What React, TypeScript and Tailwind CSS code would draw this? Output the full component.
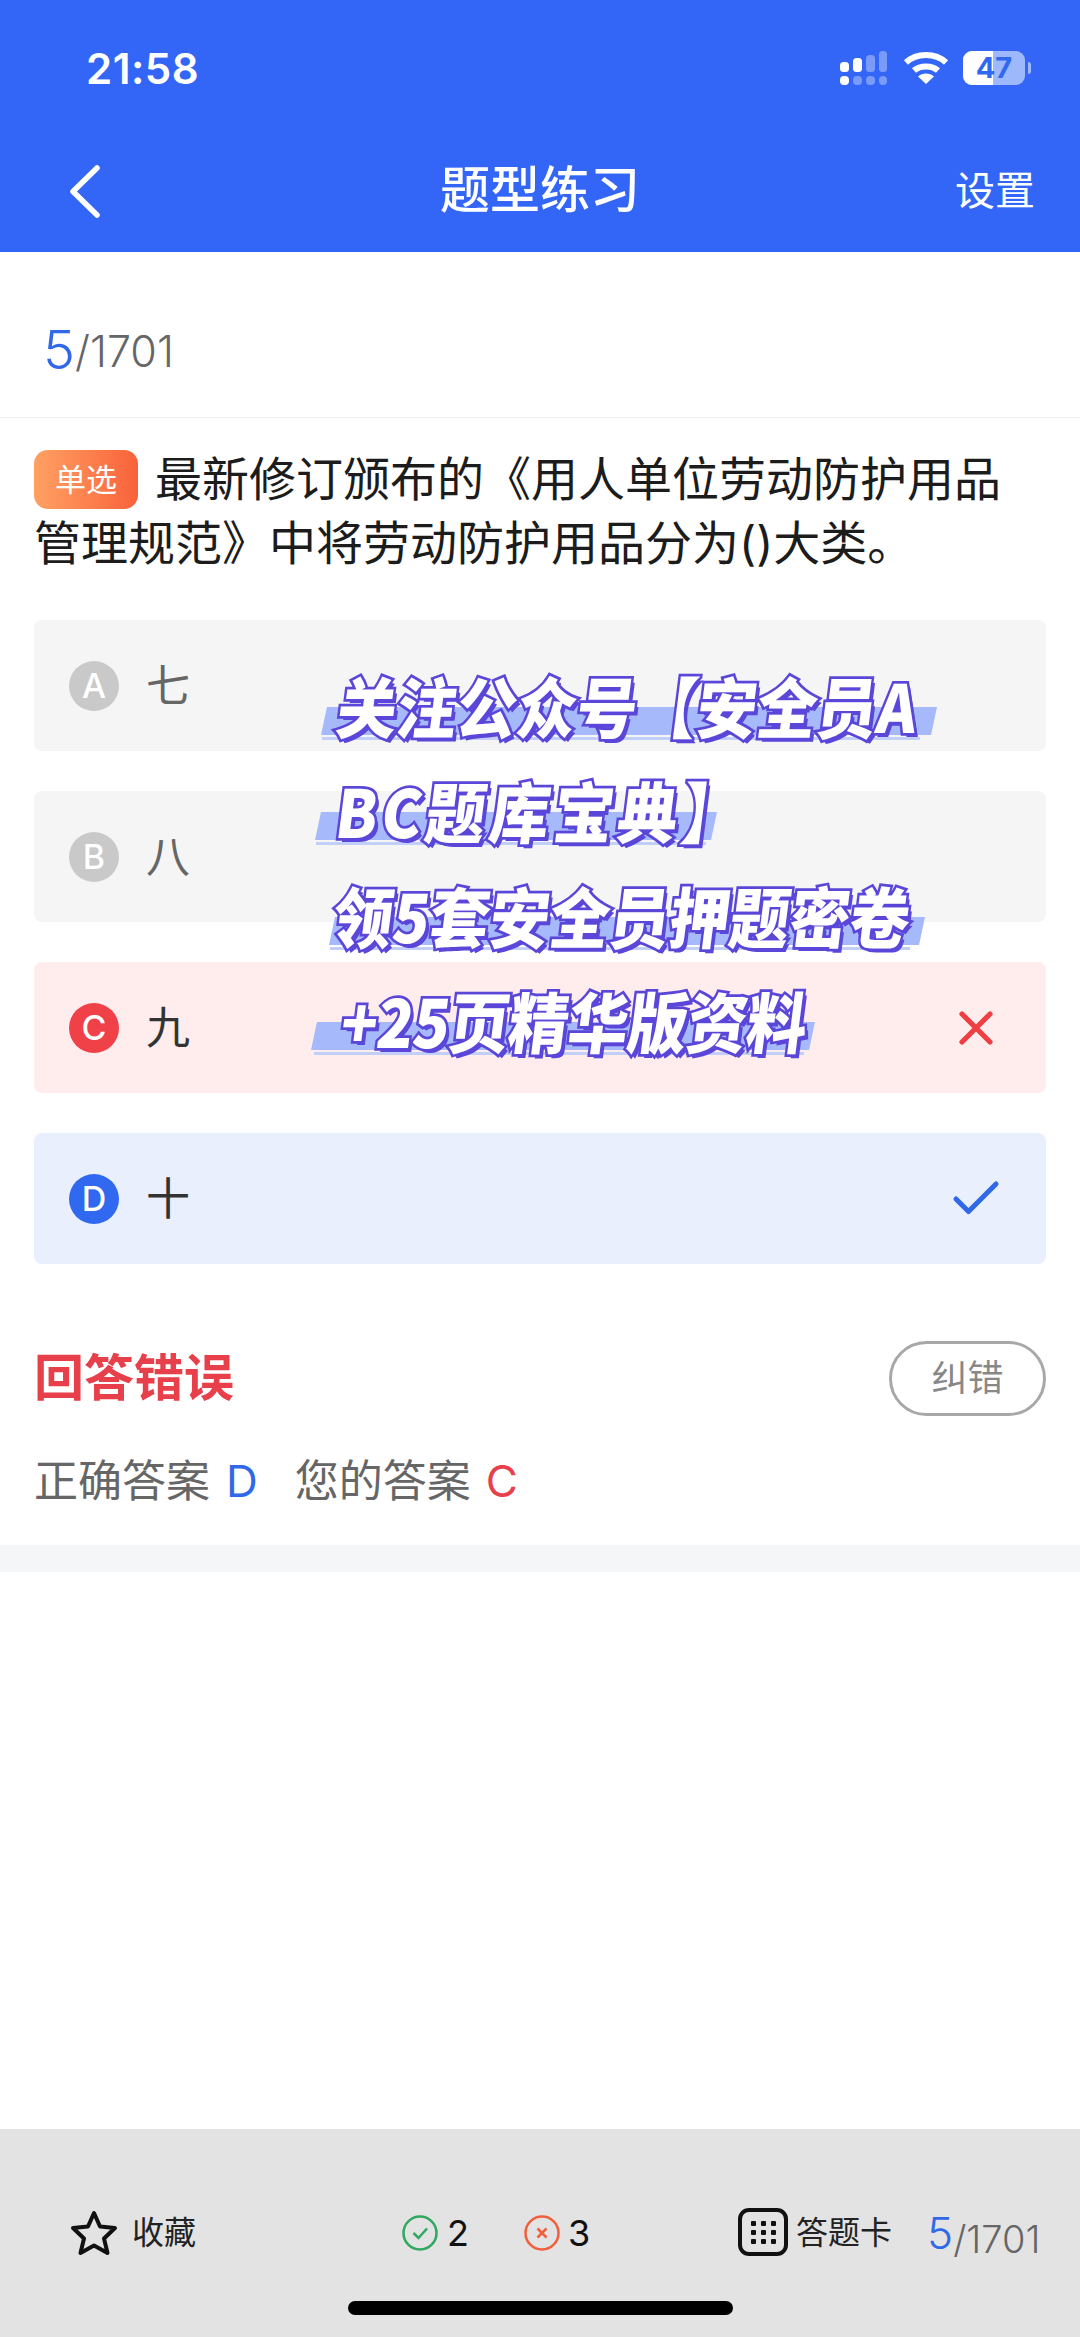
import { Check, X } from 'lucide-react';

const SANS = 'font-["Inter","Noto_Sans_CJK_SC",sans-serif]';

const options = [
  { key: 'A', text: '七', box: 'bg-[#f5f5f5]', dot: 'bg-[#c9c9c9]', color: 'text-[#666]', mark: null },
  { key: 'B', text: '八', box: 'bg-[#f5f5f5]', dot: 'bg-[#c9c9c9]', color: 'text-[#666]', mark: null },
  { key: 'C', text: '九', box: 'bg-[#ffecec]', dot: 'bg-[#f04048]', color: 'text-[#333]', mark: 'wrong' },
  { key: 'D', text: '十', box: 'bg-[#e9effd]', dot: 'bg-[#3068f0]', color: 'text-[#333]', mark: 'right' },
];

const promoLines = [
  { text: '关注公众号【安全员A', left: 'ml-[24px]', bar: 'ml-[10px] w-[610px]', thin: 'ml-[8px] w-[598px]' },
  { text: 'BC题库宝典】', left: 'ml-[23px] tracking-[4px]', bar: 'ml-[4px] w-[396px]', thin: 'ml-[2px] w-[390px]' },
  { text: '领5套安全员押题密卷', left: 'ml-[20px]', bar: 'ml-[18px] w-[590px]', thin: 'ml-[16px] w-[580px]' },
  { text: '+25页精华版资料', left: 'ml-[28px] tracking-[-0.5px]', bar: 'w-[498px]', thin: 'w-[490px]' },
];

function StatusIcons() {
  return (
    <div className="flex items-center">
      <svg width="50" height="34" viewBox="0 0 50 34" fill="#fff">
        <rect x="1" y="11" width="9" height="10" rx="3.5" />
        <rect x="14" y="7" width="9" height="14" rx="3.5" />
        <rect x="27" y="4" width="9" height="17" rx="3.5" opacity="0.35" />
        <rect x="40" y="0" width="8" height="21" rx="3.5" opacity="0.35" />
        <rect x="1" y="25" width="9" height="9" rx="4" />
        <rect x="14" y="25" width="9" height="9" rx="4" opacity="0.35" />
        <rect x="27" y="25" width="9" height="9" rx="4" opacity="0.35" />
        <rect x="40" y="25" width="8" height="9" rx="4" opacity="0.35" />
      </svg>
      <svg className="ml-[14px]" width="46" height="34" viewBox="0 0 46 34" fill="none" stroke="#fff" strokeWidth="6">
        <path d="M3 11.5C13.5 1.5 32.5 1.500 43 11.500" />
        <path d="M11 19.500C17 14 29 14 35 19.500" />
        <path d="M23 33L15 25.500C19 21.500 27 21.500 31 25.500Z" fill="#fff" stroke="none" />
      </svg>
      <div className="relative ml-[14px] h-[34px] w-[62px] overflow-hidden rounded-[9px] bg-[#9db8fb]">
        <div className="h-full w-[30px] bg-white" />
        <span className={`absolute inset-0 flex items-center justify-center text-[29px] font-bold text-[#3068f0] ${SANS}`}>47</span>
      </div>
      <div className="ml-[3px] h-[12px] w-[3px] rounded-r-full bg-[#9db8fb]" />
    </div>
  );
}

function CardIcon() {
  return (
    <div className="grid h-[48px] w-[50px] grid-cols-[repeat(3,5px)] content-center justify-center gap-x-[5px] gap-y-[4px] rounded-[11px] border-[4px] border-[#111]">
      {Array.from({ length: 9 }).map((_, i) => (
        <span key={i} className="h-[5px] w-[5px] rounded-[1px] bg-[#111]" />
      ))}
    </div>
  );
}

export default function App() {
  return (
    <div className={`relative flex h-[2337px] w-[1080px] flex-col overflow-hidden bg-white ${SANS}`}>
      {/* blue header with status bar */}
      <header className="h-[252px] shrink-0 bg-[#3366f6] px-[34px] text-white">
        <div className="flex h-[136px] items-center justify-between pl-[52px] pr-[15px]">
          <span className="text-[42px] font-semibold tracking-[0.5px]">21:58</span>
          <StatusIcons />
        </div>
        <div className="relative flex h-[116px] items-start justify-center">
          <svg className="absolute left-[36px] top-[29px]" width="30" height="53" viewBox="0 0 30 53" fill="none" stroke="#fff" strokeWidth="5.5" strokeLinecap="round" strokeLinejoin="round">
            <path d="M27 3L3 26.5L27 50" />
          </svg>
          <h1 className="mt-[19px] text-[50px] font-medium leading-[70px]">题型练习</h1>
          <span className="absolute right-[11px] top-[25px] text-[40px] leading-[60px]">设置</span>
        </div>
      </header>

      <div className="flex h-[166px] shrink-0 items-center border-b border-[#f2f2f2] pl-[43px] pt-[30px]">
        <span className="text-[54px] font-light leading-none text-[#3068e8]">5</span>
        <span className="mt-[4px] text-[43px] font-light leading-none text-[#666]">/1701</span>
      </div>

      <main className="px-[34px]">
        <p className="mt-[29px] pr-[10px] text-[47px] leading-[64px] text-[#1c1c1c]">
          <span className="relative top-[3px] mr-[17px] inline-flex h-[59px] w-[104px] items-center justify-center rounded-[14px] bg-gradient-to-r from-[#ffa063] to-[#f8613b] align-top text-[31px] leading-none text-white">
            单选
          </span>
          最新修订颁布的《用人单位劳动防护用品管理规范》中将劳动防护用品分为()大类。
        </p>

        <div className="mt-[45px] flex flex-col gap-[40px]">
          {options.map((o) => (
            <div key={o.key} className={`flex h-[131px] items-center rounded-[8px] pl-[35px] pr-[40px] ${o.box}`}>
              <span className={`flex h-[50px] w-[50px] items-center justify-center rounded-full text-[34px] font-medium text-white ${o.dot}`}>
                {o.key}
              </span>
              <span className={`ml-[27px] text-[44px] leading-none ${o.color}`}>{o.text}</span>
              {o.mark === 'wrong' && <X className="ml-auto mr-[2px] text-[#ee3f45]" size={56} strokeWidth={2.200} />}
              {o.mark === 'right' && <Check className="ml-auto text-[#3068e8]" size={60} strokeWidth={2} />}
            </div>
          ))}
        </div>

        <div className="mt-[76px] flex items-center justify-between">
          <span className="text-[50px] font-bold leading-[76px] text-[#e8404a]">回答错误</span>
          <button className="h-[75px] w-[157px] rounded-full border-[3px] border-[#a8a8a8] text-[36px] text-[#888]">纠错</button>
        </div>
        <p className="mt-[33px] text-[44px] leading-[64px] text-[#666]">
          正确答案<span className="ml-[16px] text-[#3068e8]">D</span>
          <span className="ml-[37px]">您的答案</span>
          <span className="ml-[15px] text-[#e8404a]">C</span>
        </p>
      </main>

      <div className="mt-[32px] h-[27px] shrink-0 bg-[#f4f6f7]" />

      {/* bottom bar */}
      <footer className="relative mt-auto h-[208px] shrink-0 bg-[#e3e3e3]">
        <div className="flex h-[210px] items-start pl-[70px] pr-[34px] pt-[79px]">
          <div className="flex w-[332px] items-center">
            <svg width="48" height="48" viewBox="0 0 48 46" fill="none" stroke="#111" strokeWidth="4" strokeLinejoin="round">
              <path d="M24 3L30 16.500L45 18L34 28.500L37.500 43L24 35.500L10.500 43L14 28.500L3 18L18 16.500Z" />
            </svg>
            <span className="ml-[14px] text-[32px] leading-[50px] text-[#222]">收藏</span>
          </div>
          <div className="flex w-[122px] items-center">
            <svg width="36" height="36" viewBox="0 0 36 36" fill="none" stroke="#2fa860" strokeWidth="2.500">
              <circle cx="18" cy="18" r="16.500" />
              <path d="M11.500 18l5 5 8.500-9.500" />
            </svg>
            <span className="ml-[9px] text-[36px] leading-[50px] text-[#111]">2</span>
          </div>
          <div className="flex w-[214px] items-center">
            <svg width="36" height="36" viewBox="0 0 36 36" fill="none" stroke="#f0603c" strokeWidth="2.500">
              <circle cx="18" cy="18" r="16.500" />
              <path d="M13.500 13.500l9 9M22.500 13.500l-9 9" />
            </svg>
            <span className="ml-[8px] text-[36px] leading-[50px] text-[#111]">3</span>
          </div>
          <CardIcon />
          <span className="ml-[8px] text-[32px] leading-[50px] text-[#222]">答题卡</span>
          <span className="ml-[35px] text-[44px] font-light leading-[50px] text-[#3068e8]">5</span>
          <span className="mt-[6px] text-[38px] font-light leading-[50px] text-[#666]">/1701</span>
        </div>
        <div className="absolute bottom-[22px] left-[348px] h-[14px] w-[385px] rounded-full bg-black" />
      </footer>

      {/* promo text pasted over the screenshot */}
      <div className="absolute left-[314px] top-[659px] flex flex-col">
        {promoLines.map((l) => (
          <div key={l.text} className="relative h-[105px]">
            <div className={`absolute left-0 top-[48px] h-[28px] skew-x-[-12deg] bg-[#a5b9fb] ${l.bar}`} />
            <div className={`absolute left-0 top-[78px] h-[3px] bg-[#c3cffb] ${l.thin}`} />
            <span
              className={`relative block origin-center scale-y-110 skew-x-[-8deg] whitespace-nowrap font-["Noto_Sans_CJK_SC",sans-serif] text-[60px] font-black leading-[90px] text-white [-webkit-text-stroke:5px_#5a46d8] [paint-order:stroke_fill] [text-shadow:4px_4px_0_#5a46d8] ${l.left}`}
            >
              {l.text}
            </span>
          </div>
        ))}
      </div>
    </div>
  );
}
